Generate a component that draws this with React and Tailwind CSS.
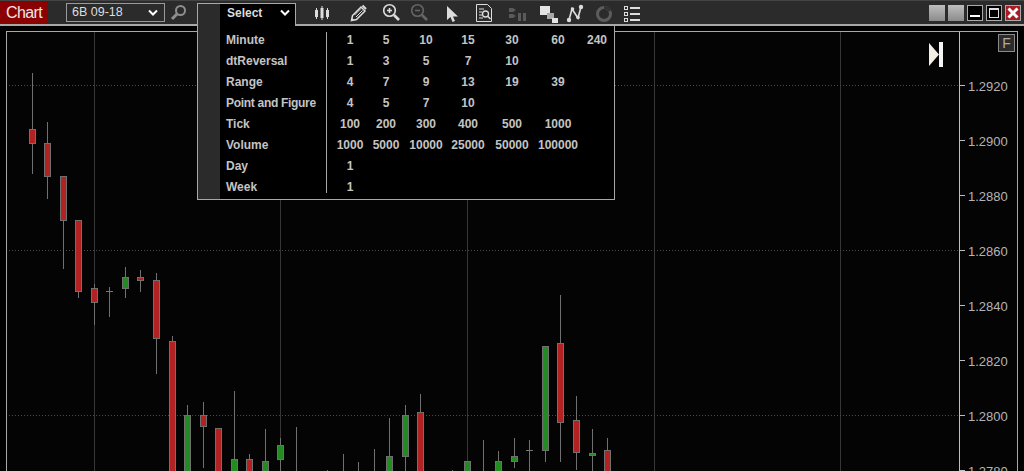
import React from "react";

const R = "#b22222", G = "#228b22";
// [bodyLeft, bodyTop, bodyBottom, color, wickTop, wickBottom]
const candles = [
  [29, 129, 144, R, 73, 174],
  [44, 143, 177, R, 122, 199],
  [60, 176, 221, R, 176, 269],
  [75, 220, 292, R, 220, 298],
  [91, 288, 303, R, 284, 325],
  [106, 291, 292, "#777", 287, 317],
  [122, 277, 289, G, 267, 298],
  [137, 277, 281, R, 270, 292],
  [153, 280, 339, R, 273, 374],
  [169, 341, 480, R, 336, 480],
  [184, 415, 480, G, 405, 480],
  [200, 415, 427, R, 402, 468],
  [215, 428, 480, R, 428, 480],
  [231, 459, 480, G, 391, 480],
  [246, 459, 480, R, 454, 480],
  [262, 461, 480, G, 429, 480],
  [277, 445, 460, G, 438, 480],
  [386, 456, 480, G, 418, 480],
  [402, 415, 457, G, 405, 480],
  [417, 412, 480, R, 394, 480],
  [464, 461, 480, G, 461, 480],
  [495, 461, 480, G, 451, 480],
  [511, 456, 462, G, 438, 468],
  [526, 450, 451, "#777", 440, 480],
  [542, 346, 451, G, 346, 462],
  [557, 343, 423, R, 295, 462],
  [573, 420, 453, R, 396, 470],
  [589, 453, 456, G, 429, 480],
  [604, 450, 480, R, 438, 480],
];
const wicksOnly = [[296, 427], [327, 470], [343, 454], [358, 462], [374, 449], [452, 470], [483, 440]];
const prices = [["1.2920", 85], ["1.2900", 140], ["1.2880", 195], ["1.2860", 250], ["1.2840", 305], ["1.2820", 360], ["1.2800", 415], ["1.2780", 470]];

const rows = [
  ["Minute", ["1", "5", "10", "15", "30", "60", "240"]],
  ["dtReversal", ["1", "3", "5", "7", "10"]],
  ["Range", ["4", "7", "9", "13", "19", "39"]],
  ["Point and Figure", ["4", "5", "7", "10"]],
  ["Tick", ["100", "200", "300", "400", "500", "1000"]],
  ["Volume", ["1000", "5000", "10000", "25000", "50000", "100000"]],
  ["Day", ["1"]],
  ["Week", ["1"]],
];

function Chart() {
  return (
    <svg width="1010" height="439" viewBox="7 32 1010 439" className="block" shapeRendering="crispEdges">
      {[94, 280, 467, 654, 840].map((x) => (
        <rect key={x} x={x} y="32" width="1" height="439" fill="#363636" />
      ))}
      {[85, 250, 415].map((y) => (
        <line key={y} x1="9" x2="959" y1={y + 0.5} y2={y + 0.5} stroke="#4a4a4a" strokeDasharray="1 2" />
      ))}
      {wicksOnly.map(([x, y]) => (
        <rect key={x} x={x} y={y} width="1" height={480 - y} fill="#707070" />
      ))}
      {candles.map(([x, t, b, c, wt, wb]) => (
        <g key={x}>
          <rect x={x + 3} y={wt} width="1" height={wb - wt} fill="#707070" />
          {c === "#777" ? (
            <rect x={x} y={t} width="7" height="1" fill="#777" />
          ) : (
            <rect x={x + 0.5} y={t + 0.5} width="6" height={b - t - 1} fill={c} stroke="#707070" />
          )}
        </g>
      ))}
      <rect x="959" y="32" width="1" height="439" fill="#bdbdbd" />
      {prices.map(([p, y]) => (
        <g key={p}>
          <rect x="959" y={y} width="6" height="1" fill="#bdbdbd" />
          <text x="968" y={y + 6} fontSize="13" fontFamily="Liberation Sans" fill="#b4b4b4" shapeRendering="auto">{p}</text>
        </g>
      ))}
    </svg>
  );
}

const Chevron = ({ className }) => (
  <svg width="10" height="8" viewBox="0 0 10 8" className={className}>
    <path d="M1 1.500 5 5.500 9 1.500" fill="none" stroke="#fff" strokeWidth="2" />
  </svg>
);

const Icon = ({ w = 20, children, className = "" }) => (
  <svg width={w} height="20" viewBox={`0 0 ${w} 20`} className={`shrink-0 ${className}`} fill="none">{children}</svg>
);

function Tools() {
  return (
    <div className="flex items-center">
      {/* candles */}
      <Icon w={16}>
        <path d="M2.500 5v11M8 3v14M13.500 5v11" stroke="#ddd" />
        <rect x="1" y="7" width="3" height="7" fill="#ddd" />
        <rect x="6.500" y="5" width="3" height="10" fill="#ddd" />
        <rect x="12" y="7" width="3" height="7" fill="#ddd" />
      </Icon>
      {/* pencil */}
      <Icon w={18} className="ml-[19px]">
        <path d="M2.500 17.500l1-5L12 4l4 4-8.500 8.500z" stroke="#ddd" strokeWidth="1.500" />
        <path d="M5.500 12L12 5.500M7 14l6.500-6.500" stroke="#ddd" />
        <path d="M13.500 2.500l3.500 3.500" stroke="#ddd" strokeWidth="2" />
        <path d="M2 18l1-3 2 2z" fill="#ddd" />
      </Icon>
      {/* zoom in */}
      <Icon w={18} className="ml-[15px]">
        <circle cx="7.500" cy="7.500" r="5.800" stroke="#ddd" strokeWidth="1.600" />
        <path d="M5 7.500h5M7.500 5v5" stroke="#ddd" strokeWidth="1.600" />
        <path d="M12 12l5 5" stroke="#ddd" strokeWidth="2.600" />
      </Icon>
      {/* zoom out */}
      <Icon w={18} className="ml-[10px]">
        <circle cx="7.500" cy="7.500" r="5.800" stroke="#666" strokeWidth="1.600" />
        <path d="M5 7.500h5" stroke="#666" strokeWidth="1.600" />
        <path d="M12 12l5 5" stroke="#666" strokeWidth="2.600" />
      </Icon>
      {/* arrow */}
      <Icon w={12} className="ml-[18px]">
        <path d="M1 3v14l3.500-3 2 5 2.500-1-2-4.500h5z" fill="#ddd" />
      </Icon>
      {/* report */}
      <Icon w={18} className="ml-[17px]">
        <path d="M1.500 1.500h11l4 4v13h-15z" stroke="#ddd" />
        <path d="M4 6h5M4 9h3M4 12h3M4 15h4" stroke="#ddd" />
        <circle cx="10.500" cy="11" r="3" stroke="#ddd" strokeWidth="1.300" />
        <path d="M12.500 13l3 3" stroke="#ddd" strokeWidth="1.500" />
      </Icon>
      {/* split */}
      <Icon w={20} className="ml-[15px]">
        <path d="M1 5h4l3 2-3 2H1zM1 11h4l3 2-3 2H1z" fill="#5a5a5a" />
        <rect x="10" y="10" width="3" height="8" fill="#5a5a5a" />
        <rect x="15" y="10" width="3" height="8" fill="#5a5a5a" />
      </Icon>
      {/* layers */}
      <Icon w={18} className="ml-[12px]">
        <rect x="0" y="3" width="10" height="9" fill="#e4e4e4" />
        <rect x="7" y="10" width="7" height="6" fill="#a8a8a8" />
        <rect x="12" y="15" width="6" height="5" fill="#e4e4e4" />
      </Icon>
      {/* nodes */}
      <Icon w={18} className="ml-[8px]">
        <path d="M3 17L6 6l6 9 3-11" stroke="#ddd" strokeWidth="1.600" />
        <circle cx="3" cy="17" r="2.200" fill="#ddd" />
        <circle cx="6.500" cy="6" r="1.800" fill="#ddd" />
        <circle cx="12" cy="14.500" r="1.800" fill="#ddd" />
        <circle cx="15" cy="4" r="2.200" fill="#ddd" />
      </Icon>
      {/* ring */}
      <Icon w={18} className="ml-[11px]">
        <circle cx="9" cy="11" r="6.500" stroke="#5c5c5c" strokeWidth="3" />
        <path d="M9 4.500A6.500 6.500 0 0 1 15 8" stroke="#333" strokeWidth="3" />
      </Icon>
      {/* list */}
      <Icon w={18} className="ml-[10px]">
        <rect x="1.500" y="3.500" width="3" height="3" stroke="#ddd" />
        <rect x="1.500" y="9.500" width="3" height="3" stroke="#ddd" />
        <rect x="1.500" y="15.500" width="3" height="3" stroke="#ddd" />
        <path d="M7 5h10M7 11h10M7 17h10" stroke="#ddd" strokeWidth="2" />
      </Icon>
    </div>
  );
}

function WinButtons() {
  return (
    <div className="flex items-center gap-[3px] mr-[3px]">
      <div className="w-[16px] h-[16px] bg-gradient-to-b from-[#bdbdbd] to-[#8c8c8c]" />
      <div className="w-[16px] h-[16px] bg-gradient-to-b from-[#bdbdbd] to-[#8c8c8c]" />
      <div className="w-[16px] h-[16px] border border-[#aaa] bg-black flex items-end justify-center pb-[3px]">
        <div className="w-[10px] h-[2px] bg-white" />
      </div>
      <div className="w-[16px] h-[16px] border border-[#aaa] bg-black flex items-center justify-center">
        <div className="w-[10px] h-[10px] border border-[#ddd] border-t-[2px]" />
      </div>
      <div className="w-[16px] h-[16px] border border-[#aaa] bg-[#a81c24] flex items-center justify-center">
        <svg width="12" height="12" viewBox="0 0 12 12">
          <path d="M1.500 1.500l9 9M10.500 1.500l-9 9" stroke="#fff" strokeWidth="3" />
        </svg>
      </div>
    </div>
  );
}

function Menu() {
  return (
    <div className="absolute left-[197px] top-[3px] w-[418px] h-[197px] font-['Liberation_Sans',Arial,sans-serif] text-[12px] font-bold text-[#c4c4c4]">
      <div className="absolute left-0 top-[22px] w-full h-[175px] bg-black border-t-0 border-[#a8a8a8] border-x-[1px] border-b-[1px]" />
      <div className="absolute right-0 left-[98px] top-[22px] h-[1px] bg-[#a8a8a8]" />
      <div className="absolute left-0 top-0 w-[99px] h-[23px] border border-b-0 border-[#a8a8a8] bg-black" />
      <div className="absolute left-[1px] top-[1px] w-[22px] h-[195px] bg-[#2b2b2b]" />
      <div className="absolute left-[23px] top-[1px] w-[75px] h-[18px] flex items-center justify-between pl-[7px] pr-[5px] text-[#dcdcdc]">
        <span>Select</span>
        <Chevron />
      </div>
      <div className="absolute left-[129px] top-[29px] w-px h-[161px] bg-[#a8a8a8]" />
      <div className="absolute left-[29px] top-[26px] flex flex-col">
        {rows.map(([label, vals]) => (
          <div key={label} className="h-[21px] flex items-center">
            <div className={label === "Point and Figure" ? "w-[104px] whitespace-nowrap tracking-[-0.3px]" : "w-[104px] whitespace-nowrap"}>{label}</div>
            {[40, 32, 48, 36, 52, 40, 38].map((w, i) => (
              <div key={i} style={{ width: w }} className="text-center whitespace-nowrap">{vals[i]}</div>
            ))}
          </div>
        ))}
      </div>
    </div>
  );
}

export default function App() {
  return (
    <div className="relative w-[1024px] h-[471px] overflow-hidden bg-black flex flex-col font-['Liberation_Sans',Arial,sans-serif]">
      <header className="h-[26px] shrink-0 bg-[#2b2b2b] border-t border-t-[#444] border-b-2 border-b-[#a8a8a8] flex items-center">
        <div className="w-[48px] h-[23px] bg-[#8b0000] text-[#f2e6e6] text-[16px] tracking-[-0.6px] leading-[23px] pl-[6px]">Chart</div>
        <div className="ml-[18px] w-[99px] h-[19px] border border-[#999] flex items-center justify-between pl-[5px] pr-[6px] text-[12.500px] text-[#ddd]">
          <span>6B 09-18</span>
          <Chevron />
        </div>
        <svg width="18" height="18" viewBox="0 0 18 18" className="ml-[5px]" fill="none">
          <circle cx="10.500" cy="6.500" r="4.500" stroke="#8e8e8e" strokeWidth="2" />
          <path d="M7 10l-5 5" stroke="#8e8e8e" strokeWidth="3" />
        </svg>
        <div className="ml-[126px]"><Tools /></div>
        <div className="ml-auto"><WinButtons /></div>
      </header>
      <main className="flex-1 min-h-0 pl-[6px] pr-[6px] pt-[5px]">
        <div className="relative h-[460px] w-[1012px] border border-[#a8a8a8] bg-[#040404] overflow-hidden">
          <Chart />
          <svg width="15" height="25" viewBox="0 0 15 25" className="absolute left-[922px] top-[10px]">
            <path d="M0 1l10 11.500L0 24z" fill="#f4efe6" />
            <rect x="10" y="0" width="4" height="25" fill="#f4f4f4" />
          </svg>
          <div className="absolute left-[991px] top-[2px] w-[17px] h-[18px] bg-[#2b2b2b] border border-[#8a8a8a] text-[#b5aca0] text-[14px] leading-[16px] text-center">F</div>
        </div>
      </main>
      <Menu />
    </div>
  );
}
